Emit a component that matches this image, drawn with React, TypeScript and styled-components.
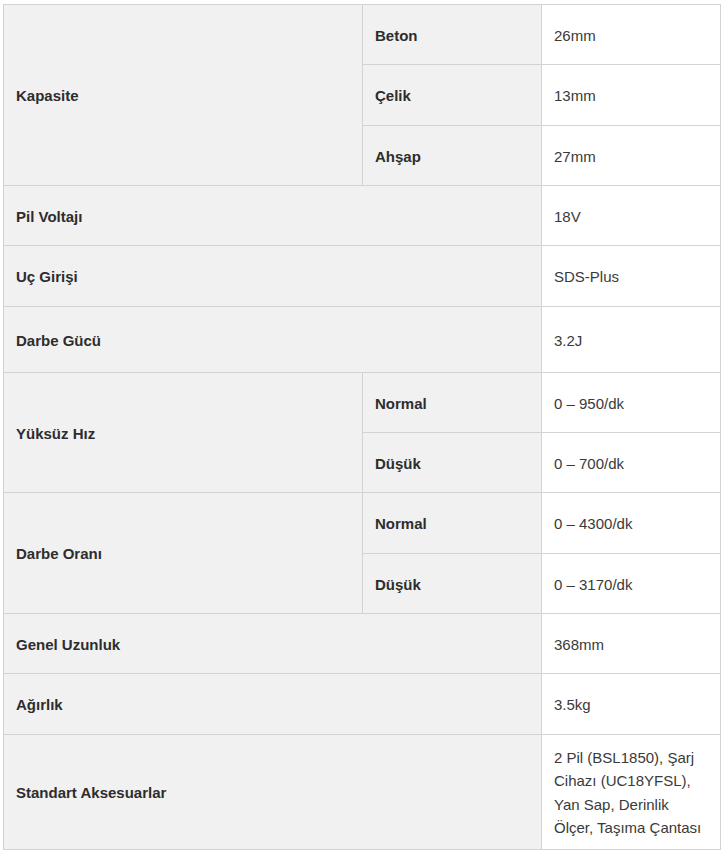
import React from "react";
import styled, { createGlobalStyle } from "styled-components";

const Global = createGlobalStyle`
  html, body { margin: 0; padding: 0; background: #ffffff; }
  body { font-family: "Liberation Sans", Arial, sans-serif; }
`;

const Page = styled.div`
  padding: 4px 2px 0 3px;
`;

const Table = styled.table`
  width: 717px;
  border-collapse: collapse;
  table-layout: fixed;
  font-family: "Liberation Sans", Arial, sans-serif;
  font-size: 15px;
  line-height: 23.4px;
  color: #333333;
`;

const Row = styled.tr<{ $h: number }>`
  height: ${(p) => p.$h}px;
`;

const Cell = styled.td`
  border: 1px solid #d3d3d3;
  padding: 11px 12px 9px;
  vertical-align: middle;
  box-sizing: border-box;
`;

const Label = styled(Cell)`
  background: #f1f1f1;
  font-weight: bold;
  color: #2d2d2d;
`;

const Value = styled(Cell)`
  background: #ffffff;
  color: #3a3a3a;
`;

type Sub = { name: string; value: string; h: number };
type Item =
  | { label: string; value: string; h: number }
  | { label: string; subs: Sub[] };

const items: Item[] = [
  {
    label: "Kapasite",
    subs: [
      { name: "Beton", value: "26mm", h: 60 },
      { name: "Çelik", value: "13mm", h: 61 },
      { name: "Ahşap", value: "27mm", h: 60 },
    ],
  },
  { label: "Pil Voltajı", value: "18V", h: 60 },
  { label: "Uç Girişi", value: "SDS-Plus", h: 61 },
  { label: "Darbe Gücü", value: "3.2J", h: 66 },
  {
    label: "Yüksüz Hız",
    subs: [
      { name: "Normal", value: "0 – 950/dk", h: 60 },
      { name: "Düşük", value: "0 – 700/dk", h: 60 },
    ],
  },
  {
    label: "Darbe Oranı",
    subs: [
      { name: "Normal", value: "0 – 4300/dk", h: 61 },
      { name: "Düşük", value: "0 – 3170/dk", h: 60 },
    ],
  },
  { label: "Genel Uzunluk", value: "368mm", h: 60 },
  { label: "Ağırlık", value: "3.5kg", h: 61 },
  {
    label: "Standart Aksesuarlar",
    value: "2 Pil (BSL1850), Şarj Cihazı (UC18YFSL), Yan Sap, Derinlik Ölçer, Taşıma Çantası",
    h: 114,
  },
];

export default function App() {
  return (
    <>
      <Global />
      <Page>
        <Table>
          <colgroup>
            <col style={{ width: "359px" }} />
            <col style={{ width: "179px" }} />
            <col style={{ width: "179px" }} />
          </colgroup>
          <tbody>
            {items.map((it) =>
              "subs" in it ? (
                it.subs.map((s, i) => (
                  <Row key={it.label + s.name} $h={s.h}>
                    {i === 0 && <Label rowSpan={it.subs.length}>{it.label}</Label>}
                    <Label>{s.name}</Label>
                    <Value>{s.value}</Value>
                  </Row>
                ))
              ) : (
                <Row key={it.label} $h={it.h}>
                  <Label colSpan={2}>{it.label}</Label>
                  <Value>{it.value}</Value>
                </Row>
              )
            )}
          </tbody>
        </Table>
      </Page>
    </>
  );
}
